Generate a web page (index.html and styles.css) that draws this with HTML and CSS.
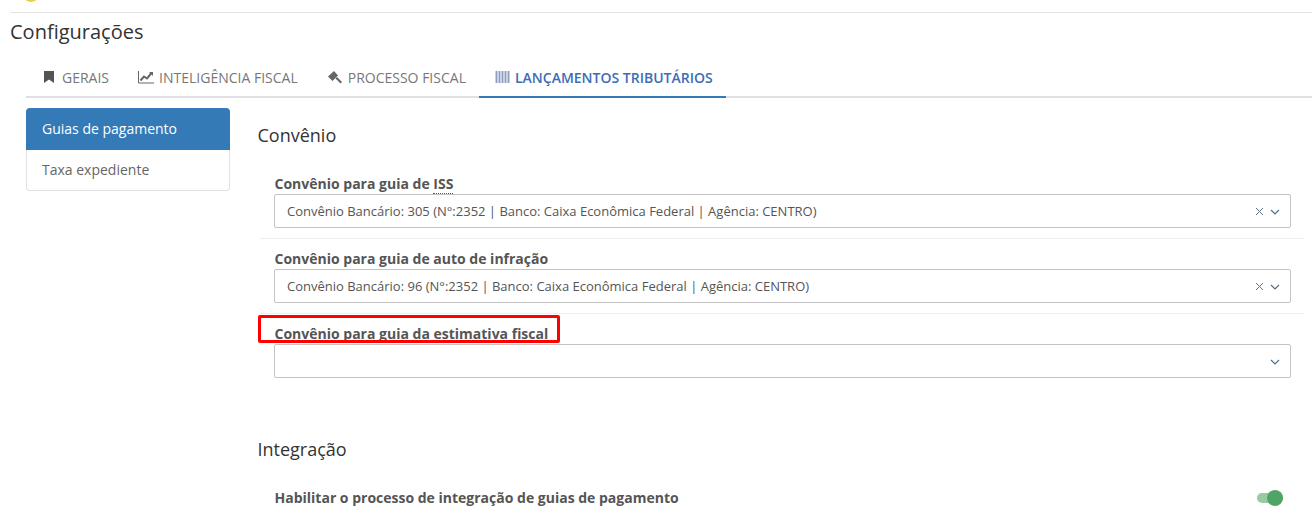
FILE: index.html
```html
<!DOCTYPE html>
<html lang="pt-BR">
<head>
  <meta charset="UTF-8">
  <title>Configurações</title>
  <link rel="stylesheet" href="styles.css">
</head>
<body>
  <div class="top-bar"><span class="top-logo"></span></div>

  <h1 class="page-title">Configurações</h1>

  <!-- Abas -->
  <ul class="tabs">
    <li class="tab">
      <svg class="tab-icon" width="15" height="14" viewBox="0 0 15 14"><path d="M2 1h10v12L7 9.500 2 13z" fill="#555"/></svg>
      GERAIS
    </li>
    <li class="tab">
      <svg class="tab-icon" width="16" height="14" viewBox="0 0 16 14"><path d="M.5 1v12h15.500" fill="none" stroke="#666"/><path d="M2.500 10.500l3.500-4 3 2 4.500-5.500" fill="none" stroke="#666" stroke-width="2"/><path d="M11 2h4v4z" fill="#666"/></svg>
      INTELIGÊNCIA FISCAL
    </li>
    <li class="tab">
      <svg class="tab-icon" width="16" height="14" viewBox="0 0 16 14"><path d="M1 6.500L7 1l4 4.500-5.500 5.500z" fill="#666"/><path d="M8.500 8.500l1.500-1.500 5 5-1.500 1.500z" fill="#666"/></svg>
      PROCESSO FISCAL
    </li>
    <li class="tab tab-active">
      <svg class="tab-icon" width="15" height="12" viewBox="0 0 15 12"><rect width="15" height="12" fill="#c9d2e4"/><path d="M1.500 0v12M4.500 0v12M7.500 0v12M10.500 0v12M13.500 0v12" stroke="#8f9cc0" fill="none"/></svg>
      LANÇAMENTOS TRIBUTÁRIOS
    </li>
  </ul>

  <div class="main">
    <!-- Menu lateral -->
    <div class="side-menu">
      <div class="side-item side-item-active">Guias de pagamento</div>
      <div class="side-item">Taxa expediente</div>
    </div>

    <div class="content">
      <h2 class="section-title">Convênio</h2>

      <div class="field field-line">
        <label class="field-label">Convênio para guia de <abbr class="hint">ISS</abbr></label>
        <div class="select">
          <span class="select-value">Convênio Bancário: 305 (N°:2352 | Banco: Caixa Econômica Federal | Agência: CENTRO)</span>
          <svg class="select-clear" width="9" height="9" viewBox="0 0 9 9"><path d="M1 1l7 7M8 1L1 8" stroke="#5f7488" fill="none"/></svg>
          <svg class="select-arrow" width="10" height="6" viewBox="0 0 10 6"><path d="M1 1l4 4 4-4" stroke="#4f6f86" stroke-width="1.200" fill="none"/></svg>
        </div>
      </div>

      <div class="field field-line">
        <label class="field-label">Convênio para guia de auto de infração</label>
        <div class="select">
          <span class="select-value">Convênio Bancário: 96 (N°:2352 | Banco: Caixa Econômica Federal | Agência: CENTRO)</span>
          <svg class="select-clear" width="9" height="9" viewBox="0 0 9 9"><path d="M1 1l7 7M8 1L1 8" stroke="#5f7488" fill="none"/></svg>
          <svg class="select-arrow" width="10" height="6" viewBox="0 0 10 6"><path d="M1 1l4 4 4-4" stroke="#4f6f86" stroke-width="1.200" fill="none"/></svg>
        </div>
      </div>

      <div class="field">
        <label class="field-label">Convênio para guia da estimativa fiscal</label>
        <div class="select">
          <span class="select-value"></span>
          <svg class="select-arrow" width="10" height="6" viewBox="0 0 10 6"><path d="M1 1l4 4 4-4" stroke="#4f6f86" stroke-width="1.200" fill="none"/></svg>
        </div>
        <div class="highlight-box"></div>
      </div>

      <h2 class="section-title section-integracao">Integração</h2>

      <div class="toggle-row">
        <span class="field-label">Habilitar o processo de integração de guias de pagamento</span>
        <span class="toggle"><span class="toggle-knob"></span></span>
      </div>
    </div>
  </div>
</body>
</html>
```
FILE: styles.css
```css
/* Geral */
html, body {
  height: 526px;
  overflow: hidden;
}
body {
  font-family: 'Open Sans', sans-serif;
  background: #fff;
  margin: 0;
  color: #555;
}
/* Barra do topo */
.top-bar {
  position: relative;
  height: 12px;
  margin-left: 10px;
  border-bottom: 1px solid #e4e4e4;
  overflow: hidden;
}
.top-logo {
  position: absolute;
  left: 14px;
  top: -10px;
  width: 14px;
  height: 12px;
  border-radius: 50%;
  background: #e3d24a;
}
.page-title {
  font-size: 20px;
  font-weight: 400;
  line-height: 27px;
  color: #333;
  margin: 5px 0 0 10px;
}
/* Abas */
.tabs {
  display: flex;
  list-style: none;
  margin: 13px 0 0 26px;
  padding: 0;
  height: 38px;
  border-bottom: 2px solid #e0e0e6;
}
.tab {
  display: flex;
  align-items: center;
  gap: 5px;
  padding: 0 13px 0 16px;
  font-size: 14px;
  color: #777;
  height: 38px;
  white-space: nowrap;
}
.tab-icon {
  flex: none;
}
.tab-active {
  color: #3d6db5;
  font-weight: 600;
  border-bottom: 2px solid #337ab7;
}
/* Layout principal */
.main {
  display: flex;
  margin: 9px 0 0 26px;
}
.side-menu {
  width: 204px;
  flex: none;
  align-self: flex-start;
  margin-top: 1px;
}
.side-item {
  box-sizing: border-box;
  height: 41px;
  line-height: 39px;
  padding-left: 15px;
  font-size: 14px;
  color: #666;
  border: 1px solid #e2e2e2;
  border-top: none;
  border-radius: 0 0 4px 4px;
}
.side-item-active {
  height: 42px;
  padding-left: 16px;
  line-height: 42px;
  background: #337ab7;
  color: #fff;
  border: none;
  border-radius: 4px 4px 0 0;
}
.content {
  flex: 1;
  padding-left: 27.5px;
}
.section-title {
  font-size: 18px;
  font-weight: 400;
  line-height: 24px;
  color: #333;
  margin: 16px 0 0;
}
/* Campos */
.field {
  position: relative;
  margin: 0 8px 0 2.5px;
  padding: 0 13px 10px 14px;
}
.section-title + .field {
  margin-top: 27px;
}
.field-line {
  border-bottom: 1px solid #eee;
  margin-bottom: 10px;
}
.field-label {
  display: block;
  padding-left: 0.5px;
  font-size: 14px;
  font-weight: 700;
  line-height: 20px;
  color: #555;
}
.hint {
  border-bottom: 1px dotted #555;
}
.select {
  display: flex;
  align-items: center;
  box-sizing: border-box;
  height: 34px;
  padding: 0 9px 0 12px;
  border: 1px solid #c4c4c4;
  border-radius: 2px;
  font-size: 13px;
  color: #555;
}
.select-value {
  flex: 1;
}
.select-clear {
  margin-right: 6px;
}
.select-arrow {
  margin: 1px 1px 0 0;
}
/* Destaque vermelho por cima do rótulo */
.highlight-box {
  position: absolute;
  left: -2.5px;
  top: -9px;
  width: 302px;
  height: 28px;
  box-sizing: border-box;
  border: 3px solid #f00;
  border-radius: 2px;
}
.section-integracao {
  margin: 49px 0 0;
}
.toggle-row {
  display: flex;
  align-items: center;
  justify-content: space-between;
  margin: 27px 29px 0 16.5px;
}
.toggle {
  position: relative;
  display: block;
  width: 26px;
  height: 10px;
  border-radius: 5px;
  background: #98cba3;
}
.toggle-knob {
  position: absolute;
  right: 0;
  top: -3px;
  width: 16px;
  height: 16px;
  border-radius: 50%;
  background: #4fa566;
}
```
